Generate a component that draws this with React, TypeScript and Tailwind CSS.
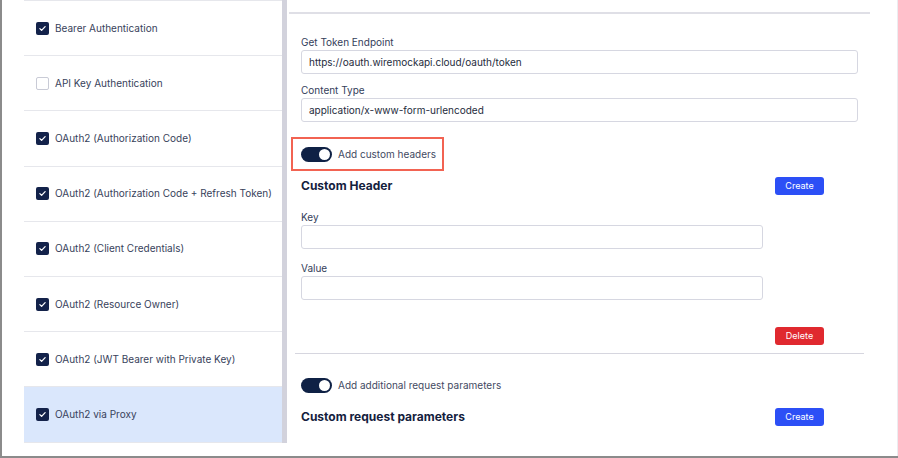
import React from "react";

const authTypes = [
  { label: "Bearer Authentication", checked: true },
  { label: "API Key Authentication", checked: false },
  { label: "OAuth2 (Authorization Code)", checked: true },
  { label: "OAuth2 (Authorization Code + Refresh Token)", checked: true },
  { label: "OAuth2 (Client Credentials)", checked: true },
  { label: "OAuth2 (Resource Owner)", checked: true },
  { label: "OAuth2 (JWT Bearer with Private Key)", checked: true },
  { label: "OAuth2 via Proxy", checked: true, selected: true },
];

function Checkbox({ checked }: { checked: boolean }) {
  if (!checked) {
    return <span className="h-[13px] w-[13px] shrink-0 rounded-[2px] border border-[#c9cbd6] bg-white" />;
  }
  return (
    <span className="flex h-[13px] w-[13px] shrink-0 items-center justify-center rounded-[2px] bg-[#13224a]">
      <svg width="9" height="9" viewBox="0 0 12 12" fill="none">
        <path d="M2.5 6.2l2.3 2.3 4.7-5" stroke="white" strokeWidth="1.7" strokeLinecap="round" strokeLinejoin="round" />
      </svg>
    </span>
  );
}

function Toggle() {
  return (
    <span className="flex h-[15px] w-[31px] shrink-0 items-center justify-end rounded-full bg-[#0f2145] pr-[2px]">
      <span className="h-[11px] w-[11px] rounded-full bg-white" />
    </span>
  );
}

function Field({ label, value, width, mt }: { label: string; value?: string; width: string; mt: string }) {
  return (
    <div className={`${mt} flex flex-col`}>
      <label className="h-[13px] text-[10px] leading-[13px] text-[#34405a]">{label}</label>
      <div className={`${width} mt-[1px] flex h-[24px] items-center rounded-[3px] border border-[#d6d7e1] bg-white px-[7px] text-[10px] text-[#242b3c]`}>
        {value}
      </div>
    </div>
  );
}

function Button({ children, color }: { children: React.ReactNode; color: "blue" | "red" }) {
  return (
    <button
      className={`flex h-[18px] w-[49px] items-center justify-center rounded-[3px] text-[9px] text-white ${
        color === "blue" ? "bg-[#2c4ff6]" : "bg-[#e0292f]"
      }`}
    >
      {children}
    </button>
  );
}

export default function App() {
  return (
    <div
      className="flex h-[458px] w-[898px] border-b-2 border-l-2 border-[#8b8b8b] bg-white"
      style={{ fontFamily: "Inter, 'Noto Sans', sans-serif" }}
    >
      <div className="flex w-[285px] shrink-0 pl-[22px]">
        <ul className="h-[443px] w-[258px] border-t border-[#e6e7ec]">
          {authTypes.map((item) => (
            <li
              key={item.label}
              className={`flex h-[55.2px] items-center gap-[6px] border-b border-[#e6e7ec] pl-[12px] text-[10px] text-[#38425b] ${
                item.selected ? "bg-[#dae7fc]" : "bg-white"
              }`}
            >
              <Checkbox checked={item.checked} />
              <span>{item.label}</span>
            </li>
          ))}
        </ul>
        <div className="h-[443px] w-[5px] bg-[#d2d2dc]" />
      </div>

      <div className="flex flex-1 flex-col border-r border-[#ececf0] pt-[12px]">
        <div className="ml-[2px] w-[581px] border-t-2 border-[#dfdfe6]" />
        <div className="flex flex-col pl-[14px]">
          <Field mt="mt-[22px]" label="Get Token Endpoint" value="https://oauth.wiremockapi.cloud/oauth/token" width="w-[557px]" />
          <Field mt="mt-[10px]" label="Content Type" value="application/x-www-form-urlencoded" width="w-[557px]" />

          <div className="-ml-[10px] mt-[15px] flex h-[34px] w-[153px] items-center gap-[6px] border-2 border-[#f26352] pl-[8px]">
            <Toggle />
            <span className="text-[10px] text-[#3f4962]">Add custom headers</span>
          </div>

          <div className="mt-[6px] flex w-[523px] items-center justify-between">
            <h3 className="text-[12px] font-bold text-[#14213d]">Custom Header</h3>
            <Button color="blue">Create</Button>
          </div>

          <Field mt="mt-[16px]" label="Key" width="w-[462px]" />
          <Field mt="mt-[13px]" label="Value" width="w-[462px]" />

          <div className="mt-[27px] flex w-[523px] justify-end">
            <Button color="red">Delete</Button>
          </div>

          <div className="-ml-[6px] mt-[8px] w-[569px] border-t border-[#d6d6df]" />

          <div className="mt-[24px] flex items-center gap-[6px]">
            <Toggle />
            <span className="text-[10px] text-[#3f4962]">Add additional request parameters</span>
          </div>

          <div className="mt-[15px] flex w-[523px] items-center justify-between">
            <h3 className="text-[12px] font-bold text-[#14213d]">Custom request parameters</h3>
            <Button color="blue">Create</Button>
          </div>
        </div>
      </div>
    </div>
  );
}
